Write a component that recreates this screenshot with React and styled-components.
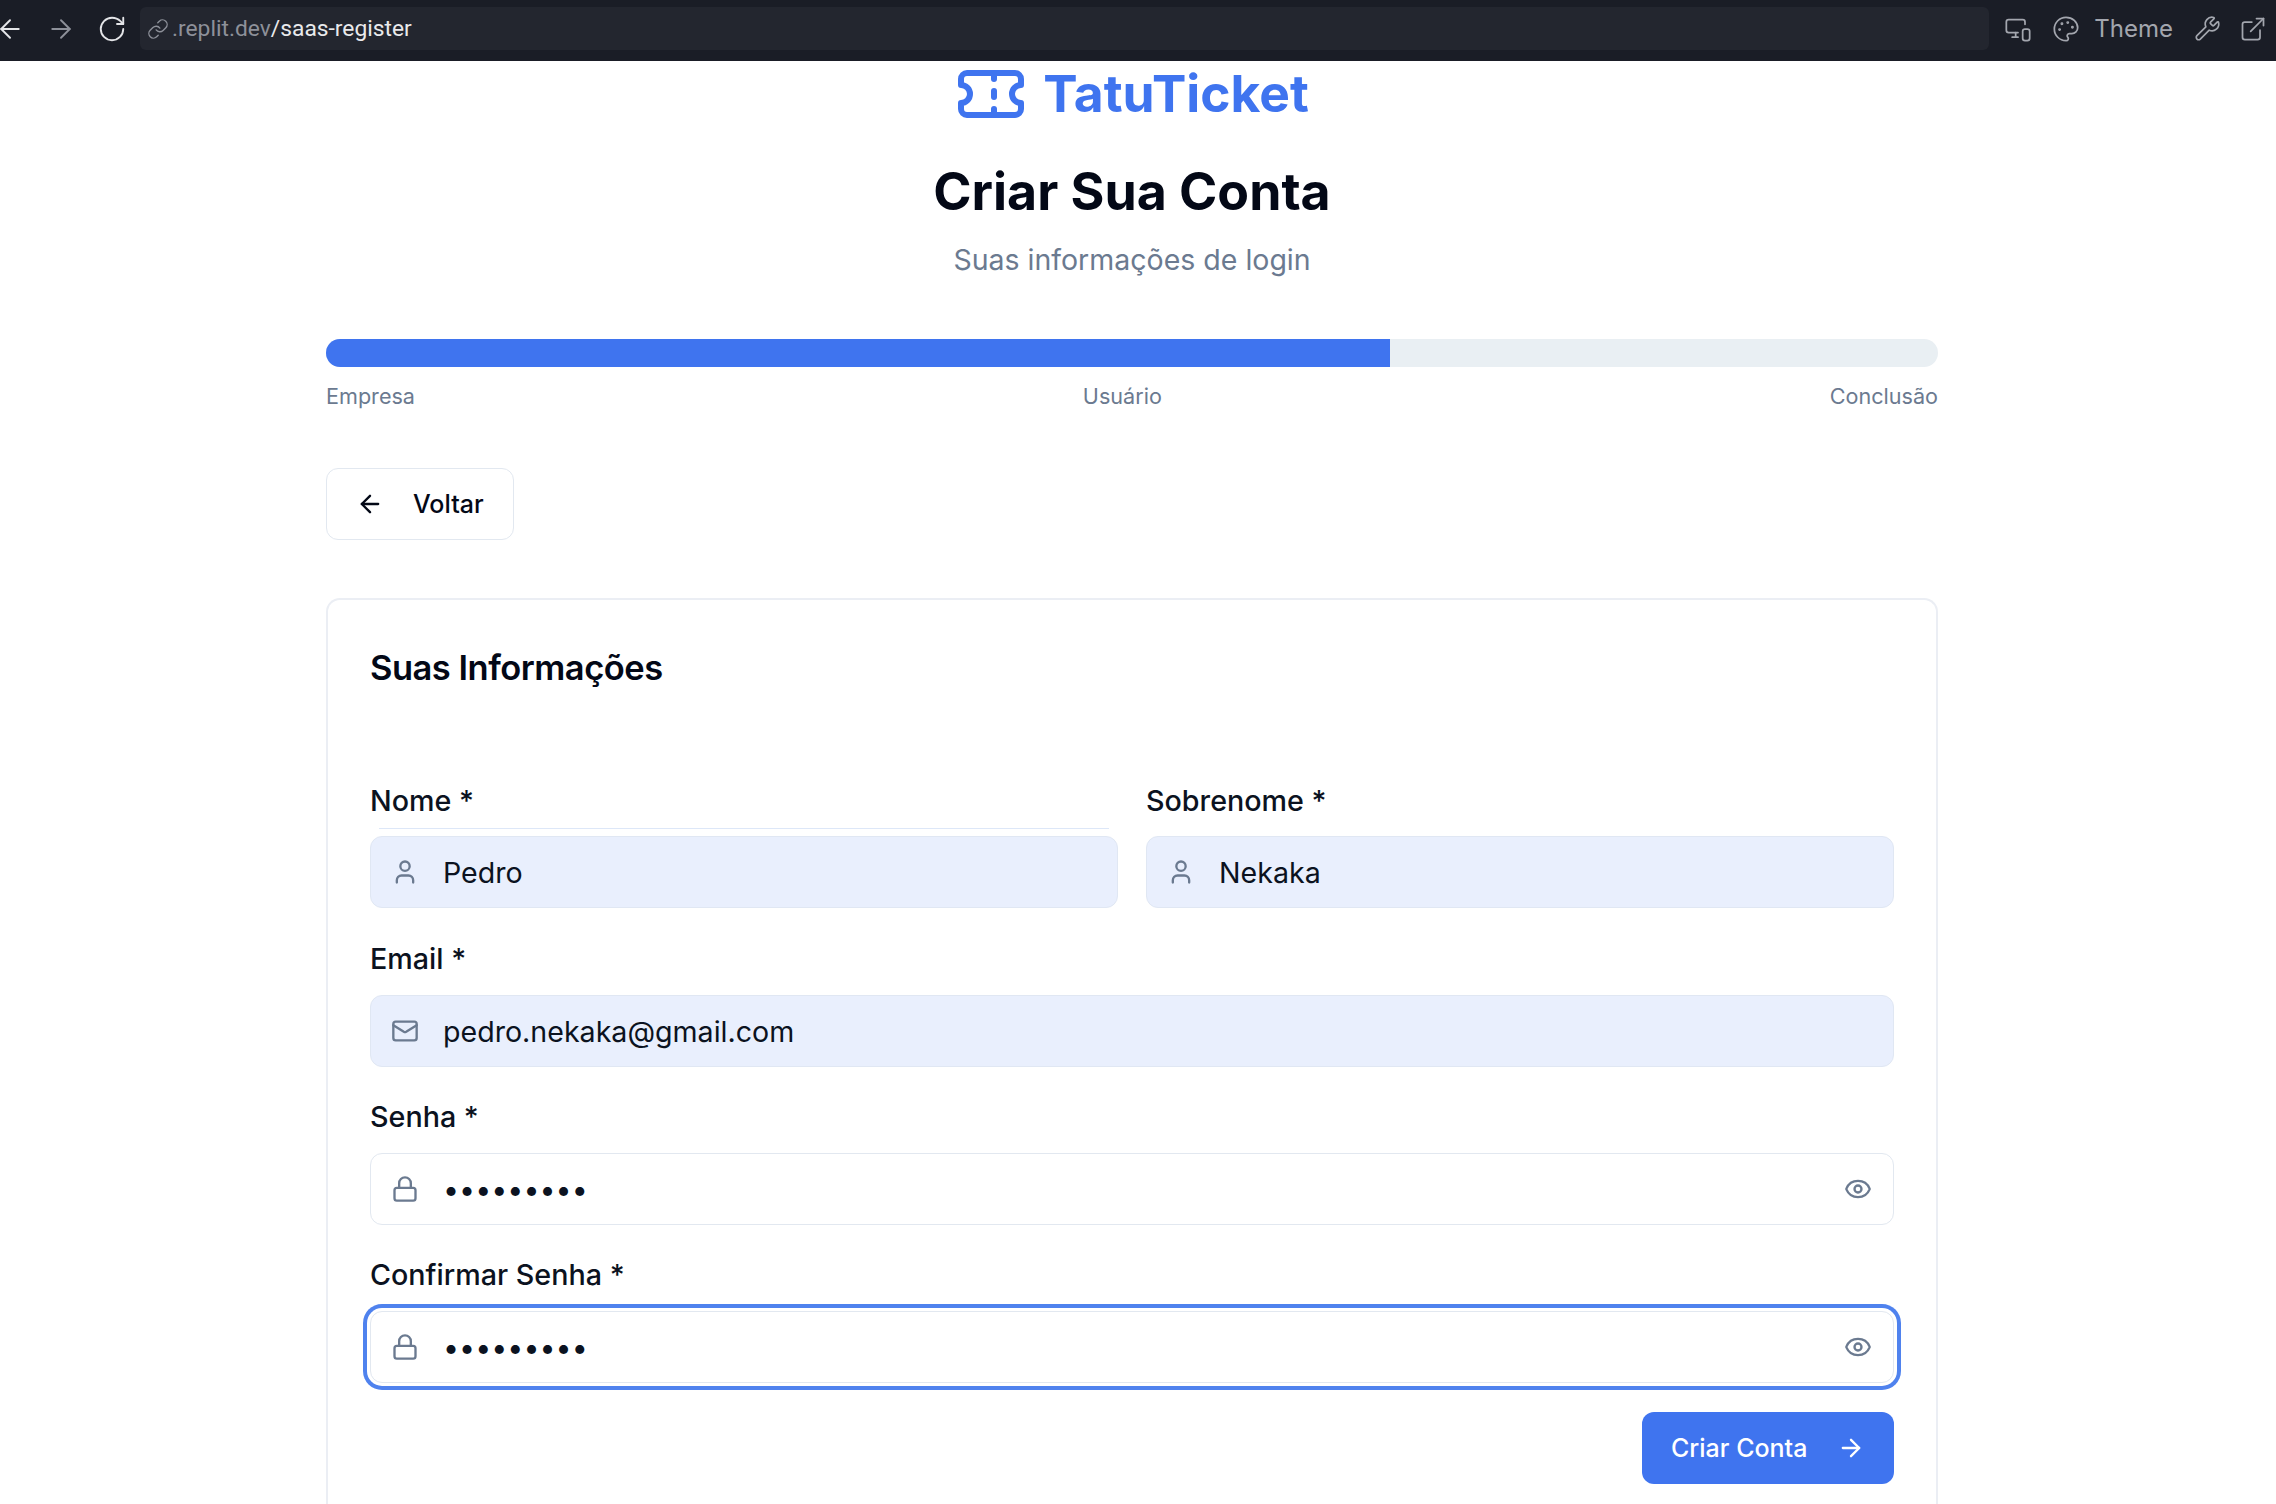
import React from "react";
import styled, { createGlobalStyle } from "styled-components";
import {
  ArrowLeft,
  ArrowRight,
  RotateCw,
  Link,
  MonitorSmartphone,
  Palette,
  Wrench,
  ExternalLink,
  Ticket,
  User,
  Mail,
  Lock,
  Eye,
} from "lucide-react";

const GlobalStyle = createGlobalStyle`
  html, body {
    margin: 0;
    height: 1504px;
    overflow: hidden;
    background: #ffffff;
    font-family: "Inter", "Liberation Sans", sans-serif;
  }
  * {
    box-sizing: border-box;
  }
`;

const BrowserBar = styled.div`
  height: 61px;
  background: #1a1d26;
  display: flex;
  align-items: flex-start;
  padding: 7px 9px 11px 0;
  color: #a3a6ae;
`;

const NavButton = styled.span`
  width: ${(p) => p.$width}px;
  height: 43px;
  flex: none;
  display: flex;
  align-items: center;
  justify-content: center;
  color: ${(p) => p.$color || "#a3a6ae"};

  svg {
    flex: none;
  }
`;

const UrlBox = styled.div`
  flex: 1;
  height: 43px;
  margin-left: 18px;
  background: #23262f;
  border-radius: 6px;
  display: flex;
  align-items: center;
  gap: 3px;
  padding-left: 7px;
  font-family: "Roboto", "Inter", sans-serif;
  font-size: 22.8px;
  color: #8d9099;
`;

const UrlPath = styled.span`
  color: #e9eaec;
`;

const BarTools = styled.div`
  display: flex;
  align-items: center;
  height: 43px;
  margin-left: 15px;
  gap: 20px;
  font-size: 24px;

  svg {
    flex: none;
  }
`;

const ThemeLabel = styled.span`
  margin: 0 1px 0 -6px;
`;

const OpenIcon = styled(ExternalLink)`
  margin-left: -2px;
`;

const Page = styled.main`
  width: 1612px;
  margin-left: 326px;
`;

const Brand = styled.div`
  height: 48px;
  margin-top: 9px;
  padding-left: 3px;
  display: flex;
  justify-content: center;
  align-items: center;
  gap: 19px;
  color: #3f74ef;
  font-size: 51.5px;
  font-weight: 700;
`;

const BrandIcon = styled(Ticket)`
  margin: 0 -3px;
  flex: none;
`;

const BrandName = styled.span`
  margin-bottom: 2px;
`;

const Title = styled.h1`
  margin: 43px 0 0;
  text-align: center;
  font-size: 51.8px;
  line-height: 60px;
  font-weight: 700;
  color: #030816;
`;

const Subtitle = styled.p`
  margin: 21px 0 0;
  text-align: center;
  font-size: 28.5px;
  line-height: 36px;
  color: #6b7a90;
`;

const Track = styled.div`
  margin-top: 61px;
  height: 28px;
  border-radius: 14px;
  background: #e9eff3;
  overflow: hidden;
`;

const TrackFill = styled.div`
  height: 100%;
  background: #3f74ef;
`;

const Steps = styled.div`
  display: flex;
  justify-content: space-between;
  margin-top: 16px;
  font-size: 21.6px;
  line-height: 26px;
  color: #6b7a90;
`;

const BackButton = styled.button`
  margin-top: 59px;
  height: 72px;
  width: 188px;
  background: #ffffff;
  border: 1px solid #e2e8f0;
  border-radius: 12px;
  display: flex;
  align-items: center;
  padding: 0 0 0 29px;
  gap: 29px;
  font-family: inherit;
  font-size: 25px;
  font-weight: 500;
  color: #030816;

  svg {
    flex: none;
  }
`;

const Card = styled.section`
  margin-top: 58px;
  border: 2px solid #ebeef4;
  border-bottom: none;
  border-radius: 14px 14px 0 0;
  padding: 45px 42px 0;
  height: 960px;
`;

const CardTitle = styled.h2`
  margin: 0;
  font-size: 34.5px;
  line-height: 46px;
  font-weight: 600;
  color: #030816;
  letter-spacing: -0.5px;
`;

const NameRow = styled.div`
  display: grid;
  grid-template-columns: 1fr 1fr;
  gap: 28px;
  margin-top: 95px;
`;

const Group = styled.div`
  margin-top: ${(p) => p.$gap || 0}px;
`;

const Label = styled.label`
  display: block;
  height: ${(p) => (p.$ruled ? 42 : 52)}px;
  padding-top: ${(p) => (p.$ruled ? 0 : 1)}px;
  font-size: 28.7px;
  line-height: 30px;
  font-weight: 500;
  color: #0b1220;
`;

const Rule = styled.div`
  height: 1px;
  margin: 0 9px 7px;
  background: #dde7f8;
`;

const Spacer = styled.div`
  height: 8px;
`;

const Field = styled.div`
  height: 72px;
  border: 1px solid ${(p) => (p.$filled ? "#e0e7f3" : "#e2e8f0")};
  border-radius: 12px;
  background: ${(p) => (p.$filled ? "#e9effd" : "#ffffff")};
  display: flex;
  align-items: center;
  padding: 0 21px 0 20px;
  gap: 24px;
  color: #6b7a90;
  box-shadow: ${(p) =>
    p.$focused ? "0 0 0 3px #ffffff, 0 0 0 7px #4f82ee" : "none"};

  svg {
    flex: none;
  }
`;

const FieldInput = styled.input`
  flex: 1;
  min-width: 0;
  border: none;
  outline: none;
  background: transparent;
  padding: 0;
  font-family: inherit;
  font-size: 28.6px;
  color: #0b1220;
`;

const Actions = styled.div`
  display: flex;
  justify-content: flex-end;
  margin-top: 29px;
`;

const SubmitButton = styled.button`
  width: 252px;
  height: 72px;
  border: none;
  border-radius: 12px;
  background: #3f74ef;
  color: #ffffff;
  display: flex;
  align-items: center;
  padding: 0 0 0 29px;
  gap: 30px;
  font-family: inherit;
  font-size: 25px;
  font-weight: 500;

  svg {
    flex: none;
  }
`;

const ICON = { size: 28, strokeWidth: 2 };

function TextField({ icon: Icon, value, type = "text", filled, focused }) {
  return (
    <Field $filled={filled} $focused={focused}>
      <Icon {...ICON} />
      <FieldInput type={type} value={value} readOnly />
      {type === "password" && <Eye {...ICON} />}
    </Field>
  );
}

export default function App() {
  return (
    <>
      <GlobalStyle />
      <BrowserBar>
        <NavButton $width={20} $color="#e4e5e8">
          <ArrowLeft size={30} strokeWidth={1.5} />
        </NavButton>
        <NavButton $width={82} $color="#8d9099">
          <ArrowRight size={30} strokeWidth={1.5} />
        </NavButton>
        <NavButton $width={20} $color="#e4e5e8">
          <RotateCw size={30} strokeWidth={1.5} />
        </NavButton>
        <UrlBox>
          <Link size={22} strokeWidth={1.5} />
          <span>
            .replit.dev<UrlPath>/saas-register</UrlPath>
          </span>
        </UrlBox>
        <BarTools>
          <MonitorSmartphone size={28} strokeWidth={1.5} />
          <Palette size={28} strokeWidth={1.5} />
          <ThemeLabel>Theme</ThemeLabel>
          <Wrench size={27} strokeWidth={1.5} />
          <OpenIcon size={28} strokeWidth={1.5} />
        </BarTools>
      </BrowserBar>
      <Page>
        <Brand>
          <BrandIcon size={72} strokeWidth={2} />
          <BrandName>TatuTicket</BrandName>
        </Brand>
        <Title>Criar Sua Conta</Title>
        <Subtitle>Suas informações de login</Subtitle>
        <Track>
          <TrackFill style={{ width: "66%" }} />
        </Track>
        <Steps>
          <span>Empresa</span>
          <span>Usuário</span>
          <span>Conclusão</span>
        </Steps>
        <BackButton>
          <ArrowLeft size={28} strokeWidth={2} />
          Voltar
        </BackButton>
        <Card>
          <CardTitle>Suas Informações</CardTitle>
          <NameRow>
            <Group>
              <Label $ruled>Nome *</Label>
              <Rule />
              <TextField icon={User} value="Pedro" filled />
            </Group>
            <Group>
              <Label $ruled>Sobrenome *</Label>
              <Spacer />
              <TextField icon={User} value="Nekaka" filled />
            </Group>
          </NameRow>
          <Group $gap={35}>
            <Label>Email *</Label>
            <TextField icon={Mail} value="pedro.nekaka@gmail.com" filled />
          </Group>
          <Group $gap={34}>
            <Label>Senha *</Label>
            <TextField icon={Lock} value="123456789" type="password" />
          </Group>
          <Group $gap={34}>
            <Label>Confirmar Senha *</Label>
            <TextField icon={Lock} value="123456789" type="password" focused />
          </Group>
          <Actions>
            <SubmitButton>
              Criar Conta
              <ArrowRight size={28} strokeWidth={2} />
            </SubmitButton>
          </Actions>
        </Card>
      </Page>
    </>
  );
}
